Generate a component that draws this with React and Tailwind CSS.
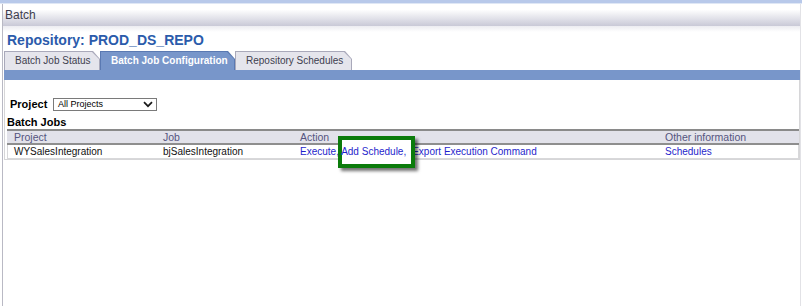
import React from "react";

function Tab({ label, active, width }) {
  return (
    <div
      className={`h-[19px] ${width} ${active ? "bg-[#5a79b2]" : "bg-[#a9a9ba]"} pt-px pl-px pr-px [clip-path:polygon(0_0,calc(100%_-_7px)_0,100%_8px,100%_100%,0_100%)]`}
    >
      <div
        className={`h-full flex items-center pl-[10px] text-[10px] leading-[12px] whitespace-nowrap ${active ? "bg-[#7896ca] text-white font-bold" : "bg-[#e5e5ec] text-[#40404f]"} [clip-path:polygon(0_0,calc(100%_-_7px)_0,100%_7px,100%_100%,0_100%)]`}
      >
        {label}
      </div>
    </div>
  );
}

export default function App() {
  return (
    <div className="w-[802px] h-[306px] bg-white overflow-hidden relative font-['Liberation_Sans',Arial,sans-serif]">
      <div className="h-[3px] bg-[#b8c9ea]" />
      <div className="h-px bg-[#dfe7f5]" />
      <div className="ml-[2px] w-[799px] h-[302px] border-l border-l-[#b9b9c4] border-r border-r-[#e2e2e6]">
        <div className="h-[22px] bg-linear-to-b from-white from-25% to-[#c9c9d7] flex items-center pl-[2px] text-[12px] leading-[14px] text-[#3d3d4d]">
          Batch
        </div>
        <div className="h-[6px] bg-linear-to-b from-[#ececf1] to-white" />
        <div className="pl-[4px] h-[16px] leading-[16px] text-[14px] font-bold text-[#2b5bab]">
          Repository: PROD_DS_REPO
        </div>
        <div className="mt-[3px] flex pl-[1px] h-[19px]">
          <Tab label="Batch Job Status" width="w-[96px]" />
          <Tab label="Batch Job Configuration" width="w-[135px]" active />
          <Tab label="Repository Schedules" width="w-[117px]" />
        </div>
        <div className="h-[10px] ml-[1px] bg-[#7896ca]" />
        <div className="ml-[1px] h-[80px] border-l border-r border-b border-[#d6d6d8] pt-[17px]">
          <div className="flex items-center h-[15px] pl-[5px]">
            <div className="w-[43px] text-[11px] font-bold text-black leading-[13px]">Project</div>
            <div className="w-[104px] h-[13px] border border-[#7a7a7a] bg-white flex items-center justify-between pl-[4px] pr-[2px]">
              <span className="text-[9px] leading-[11px] text-black">All Projects</span>
              <svg width="10" height="7" viewBox="0 0 10 7" className="mr-[1px]">
                <path d="M1 1.2 L5 5.2 L9 1.2" fill="none" stroke="#1a1a1a" strokeWidth="1.7" />
              </svg>
            </div>
          </div>
          <div className="mt-[3px] h-[14px] pl-[2px] text-[11px] font-bold leading-[14px] text-black">Batch Jobs</div>
          <div className="relative ml-[2px]">
            <div className="border-t-2 border-[#8a8a8a] bg-[#e2e2ea] h-[14px] pl-[7px] grid grid-cols-[149px_137px_365px_1fr] text-[10.5px] leading-[12px] text-[#555580]">
              <div>Project</div>
              <div>Job</div>
              <div>Action</div>
              <div>Other information</div>
            </div>
            <div className="h-[2px] bg-[#8e8e8e]" />
            <div className="h-[14px] border-l border-r border-b border-[#d8d8da] pl-[6px] grid grid-cols-[149px_137px_365px_1fr] text-[10px] leading-[13px] text-[#111]">
              <div>WYSalesIntegration</div>
              <div>bjSalesIntegration</div>
              <div className="text-[#1f1fcc] whitespace-nowrap">
                Execute, <span className="relative z-[2]">Add Schedule,</span>
                <span className="ml-[6px]">Export Execution Command</span>
              </div>
              <div className="text-[#1f1fcc]">Schedules</div>
            </div>
            <div className="absolute left-[331px] top-[7px] w-[77px] h-[32px] border-4 border-[#0b7b0b] bg-white z-[1] shadow-[3px_3px_3px_rgba(0,0,0,0.55)]" />
          </div>
        </div>
      </div>
    </div>
  );
}
